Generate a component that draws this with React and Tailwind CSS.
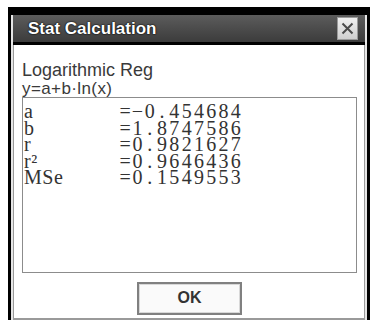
const rows = [
  { label: 'a', value: '=−0.454684' },
  { label: 'b', value: '=1.8747586' },
  { label: 'r', value: '=0.9821627' },
  { label: 'r²', value: '=0.9646436' },
  { label: 'MSe', value: '=0.1549553' },
]

function MonoValue({ text }) {
  return (
    <span className="flex">
      {text.split('').map((ch, i) => (
        <span key={i} className="inline-block w-[12.3px] text-center">
          {ch}
        </span>
      ))}
    </span>
  )
}

export default function App() {
  return (
    <div className="w-[373px] h-[326px] bg-white pt-[7px] pl-[8px] overflow-hidden">
      <div className="w-[362px] h-[313px] bg-black px-[3px] pt-[8px] flex">
        <div className="flex-1 bg-[#e6e6e6] px-[2px] flex flex-col">
          {/* title bar */}
          <div className="h-[30px] bg-gradient-to-b from-[#5c5c5c] to-[#3c3c3c] border-b-[3px] border-black flex items-center justify-between pl-[15px] pr-[7px]">
            <span className="font-['Liberation_Sans',sans-serif] font-bold text-[17px] leading-none text-white [text-shadow:_0_0_2px_#000,_0_0_1px_#000]">
              Stat Calculation
            </span>
            <div className="w-[21px] h-[23px] bg-gradient-to-b from-[#f0f0f0] to-[#cfcfcf] border border-[#9a9a9a] flex items-center justify-center">
              <svg width="13" height="13" viewBox="0 0 13 13">
                <path d="M1.5 1.5 L11.5 11.5 M11.5 1.5 L1.5 11.5" stroke="#4a4a4a" strokeWidth="2" />
              </svg>
            </div>
          </div>

          {/* body */}
          <div className="flex-1 bg-white border-x border-b-2 border-[#9a9a9a] flex flex-col px-[8px] pr-[7px]">
            <div className="pt-[15px] font-['Liberation_Sans',sans-serif] text-[18px] leading-[20px] text-[#3a3a3a]">
              Logarithmic Reg
            </div>
            <div className="font-['Liberation_Sans',sans-serif] text-[17px] leading-[17px] tracking-[0.4px] text-[#3a3a3a]">
              y=a+b·ln(x)
            </div>
            <div className="h-[176px] border border-[#8c8c8c] pt-[5px] pl-[1px] font-['Liberation_Serif',serif] text-[#333]">
              {rows.map((row) => (
                <div key={row.label} className="flex items-center h-[16.5px] leading-[16.5px]">
                  <span className="w-[95px] text-[20px] tracking-[0.5px]">{row.label}</span>
                  <span className="text-[20px]">
                    <MonoValue text={row.value} />
                  </span>
                </div>
              ))}
            </div>
            <div className="flex-1 flex items-center justify-center pt-[5px]">
              <button className="w-[105px] h-[33px] border-2 border-[#808080] bg-[#fafafa] shadow-[inset_0_0_0_1px_#d8d8d8] font-['Liberation_Sans',sans-serif] font-bold text-[16px] text-[#333]">
                OK
              </button>
            </div>
          </div>
        </div>
      </div>
    </div>
  )
}
